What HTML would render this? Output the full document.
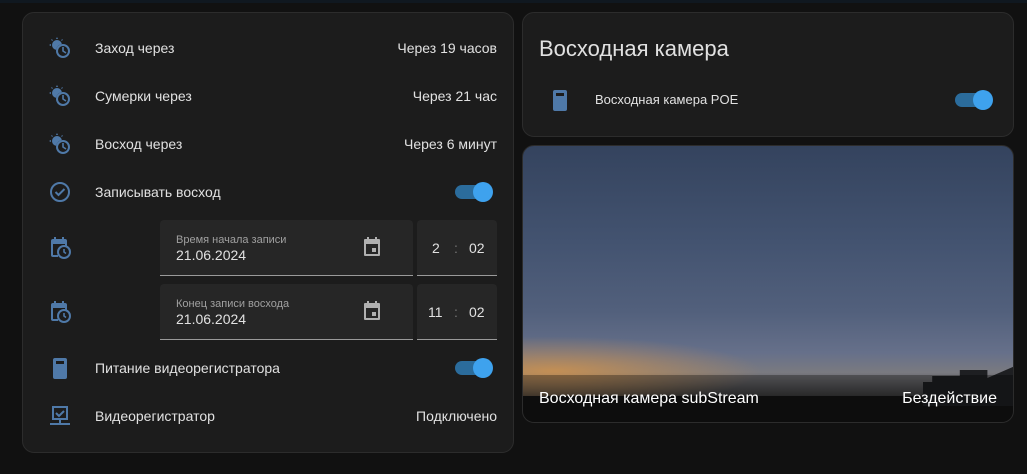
<!DOCTYPE html>
<html><head><meta charset="utf-8"><style>
*{box-sizing:border-box;margin:0;padding:0}
body{width:1027px;height:474px;background:#111;font-family:"Liberation Sans",sans-serif;color:#e1e1e1;position:relative;overflow:hidden}
.top{position:absolute;left:0;top:0;width:1027px;height:3px;background:#101820}
.card{position:absolute;background:#1c1c1c;border:1px solid #2c2c2c;border-radius:12px}
.t{position:absolute;font-size:14px;white-space:nowrap}
.r{text-align:right}
.ic{position:absolute}
.tog{position:absolute;width:36px;height:14px;border-radius:7px;background:#2b6c9c}
.tog::after{content:"";position:absolute;right:-2px;top:-3px;width:20px;height:20px;border-radius:50%;background:#3ea2ee}
.fld{position:absolute;background:#262626;border-bottom:1px solid #9a9a9a;border-radius:4px 4px 0 0}
.lab{position:absolute;font-size:11px;color:#a0a0a0}
.val{position:absolute;font-size:14px;color:#e1e1e1}
</style></head><body>
<div class="top"></div>
<div class="card" style="left:22px;top:12px;width:492px;height:441px"></div>
<div class="card" style="left:522px;top:12px;width:492px;height:125px"></div>
<div class="card" style="left:522px;top:145px;width:492px;height:278px;overflow:hidden;background:linear-gradient(180deg,#34435e 0%,#435370 35%,#52607c 60%,#66708a 75%,#7a7a80 82%,#303030 92%,#151515 100%)">
<div style="position:absolute;left:-60px;top:190px;width:300px;height:70px;background:radial-gradient(ellipse at 30% 50%,rgba(220,150,70,0.75),rgba(200,130,60,0) 70%)"></div>
<div style="position:absolute;left:0;top:250px;width:492px;height:28px;background:#141414"></div>
<div style="position:absolute;left:400px;top:220px;width:92px;height:40px;background:#1e1f22;clip-path:polygon(0 40%,10% 40%,10% 25%,40% 25%,40% 10%,70% 10%,70% 30%,100% 0,100% 100%,0 100%)"></div>
<div style="position:absolute;left:0;top:229px;width:492px;height:49px;background:rgba(0,0,0,0.3)"></div>
<div style="position:absolute;left:16px;top:244px;font-size:16px;color:#fff">Восходная камера subStream</div>
<div style="position:absolute;right:16px;top:244px;font-size:16px;color:#fff">Бездействие</div>
</div>

<svg class="ic" style="left:48px;top:36px" width="24" height="24" viewBox="0 0 24 24" fill="#4f79a8"><circle cx="9" cy="9" r="5"/><path d="M9 1l1 2H8zM1 9l2-1v2zM3 3l2 1-1 1zM15 3l-1 2-1-1z"/><circle cx="15" cy="15" r="7" fill="#1c1c1c"/><circle cx="15" cy="15" r="6" fill="none" stroke="#4f79a8" stroke-width="2"/><path d="M15 11v4l3 2" stroke="#4f79a8" stroke-width="1.6" fill="none"/></svg>
<svg class="ic" style="left:48px;top:84px" width="24" height="24" viewBox="0 0 24 24" fill="#4f79a8"><circle cx="9" cy="9" r="5"/><path d="M9 1l1 2H8zM1 9l2-1v2zM3 3l2 1-1 1zM15 3l-1 2-1-1z"/><circle cx="15" cy="15" r="7" fill="#1c1c1c"/><circle cx="15" cy="15" r="6" fill="none" stroke="#4f79a8" stroke-width="2"/><path d="M15 11v4l3 2" stroke="#4f79a8" stroke-width="1.6" fill="none"/></svg>
<svg class="ic" style="left:48px;top:132px" width="24" height="24" viewBox="0 0 24 24" fill="#4f79a8"><circle cx="9" cy="9" r="5"/><path d="M9 1l1 2H8zM1 9l2-1v2zM3 3l2 1-1 1zM15 3l-1 2-1-1z"/><circle cx="15" cy="15" r="7" fill="#1c1c1c"/><circle cx="15" cy="15" r="6" fill="none" stroke="#4f79a8" stroke-width="2"/><path d="M15 11v4l3 2" stroke="#4f79a8" stroke-width="1.6" fill="none"/></svg>
<svg class="ic" style="left:48px;top:180px" width="24" height="24" viewBox="0 0 24 24" fill="none" stroke="#4f79a8" stroke-width="2"><circle cx="12" cy="12" r="9"/><path d="M7.5 12l3 3 6-6"/></svg>
<svg class="ic" style="left:48px;top:236px" width="24" height="24" viewBox="0 0 24 24" fill="#4f79a8"><path d="M6 1h2v2h6V1h2v2h1a2 2 0 012 2v5h-2V8H5v11h5v2H5a2 2 0 01-2-2V5a2 2 0 012-2h1z"/><circle cx="16" cy="16" r="6" fill="none" stroke="#4f79a8" stroke-width="2"/><path d="M16 13v3l2 1.5" stroke="#4f79a8" stroke-width="1.6" fill="none"/></svg>
<svg class="ic" style="left:48px;top:300px" width="24" height="24" viewBox="0 0 24 24" fill="#4f79a8"><path d="M6 1h2v2h6V1h2v2h1a2 2 0 012 2v5h-2V8H5v11h5v2H5a2 2 0 01-2-2V5a2 2 0 012-2h1z"/><circle cx="16" cy="16" r="6" fill="none" stroke="#4f79a8" stroke-width="2"/><path d="M16 13v3l2 1.5" stroke="#4f79a8" stroke-width="1.6" fill="none"/></svg>
<svg class="ic" style="left:48px;top:356px" width="24" height="24" viewBox="0 0 24 24"><rect x="5" y="2" width="14" height="21" rx="2" fill="#4f79a8"/><rect x="8" y="5" width="8" height="3" fill="#1c1c1c"/></svg>
<svg class="ic" style="left:48px;top:404px" width="24" height="24" viewBox="0 0 24 24" fill="none" stroke="#4f79a8" stroke-width="2"><rect x="5" y="3" width="14" height="12"/><path d="M8 9l3 3 5-5M12 15v4M2 20h20"/></svg>

<div class="t" style="left:95px;top:40px">Заход через</div>
<div class="t r" style="right:530px;top:40px">Через 19 часов</div>
<div class="t" style="left:95px;top:88px">Сумерки через</div>
<div class="t r" style="right:530px;top:88px">Через 21 час</div>
<div class="t" style="left:95px;top:136px">Восход через</div>
<div class="t r" style="right:530px;top:136px">Через 6 минут</div>
<div class="t" style="left:95px;top:184px">Записывать восход</div>
<div class="tog" style="left:455px;top:185px"></div>

<div class="fld" style="left:160px;top:220px;width:253px;height:56px"><div class="lab" style="left:16px;top:14px">Время начала записи</div><div class="val" style="left:16px;top:27px">21.06.2024</div>
<svg style="position:absolute;left:200px;top:15px" width="24" height="24" viewBox="0 0 24 24" fill="#b0b0b0"><path d="M7 2h2v2h6V2h2v2h2a1 1 0 011 1v15a1 1 0 01-1 1H5a1 1 0 01-1-1V5a1 1 0 011-1h2zM6 9v10h12V9zm6 4h4v4h-4z"/></svg></div>
<div class="fld" style="left:417px;top:220px;width:80px;height:56px"><div class="val" style="left:15px;top:20px">2</div><div class="val" style="left:37px;top:20px;color:#777">:</div><div class="val" style="left:52px;top:20px">02</div></div>
<div class="fld" style="left:160px;top:284px;width:253px;height:56px"><div class="lab" style="left:16px;top:14px">Конец записи восхода</div><div class="val" style="left:16px;top:27px">21.06.2024</div>
<svg style="position:absolute;left:200px;top:15px" width="24" height="24" viewBox="0 0 24 24" fill="#b0b0b0"><path d="M7 2h2v2h6V2h2v2h2a1 1 0 011 1v15a1 1 0 01-1 1H5a1 1 0 01-1-1V5a1 1 0 011-1h2zM6 9v10h12V9zm6 4h4v4h-4z"/></svg></div>
<div class="fld" style="left:417px;top:284px;width:80px;height:56px"><div class="val" style="left:11px;top:20px">11</div><div class="val" style="left:37px;top:20px;color:#777">:</div><div class="val" style="left:52px;top:20px">02</div></div>

<div class="t" style="left:95px;top:360px">Питание видеорегистратора</div>
<div class="tog" style="left:455px;top:361px"></div>
<div class="t" style="left:95px;top:408px">Видеорегистратор</div>
<div class="t r" style="right:530px;top:408px">Подключено</div>

<div class="t" style="left:539px;top:36px;font-size:22px">Восходная камера</div>
<svg class="ic" style="left:548px;top:88px" width="24" height="24" viewBox="0 0 24 24"><rect x="5" y="2" width="14" height="21" rx="2" fill="#4f79a8"/><rect x="8" y="5" width="8" height="3" fill="#1c1c1c"/></svg>
<div class="t" style="left:595px;top:92px;font-size:13px">Восходная камера POE</div>
<div class="tog" style="left:955px;top:93px"></div>
</body></html>
